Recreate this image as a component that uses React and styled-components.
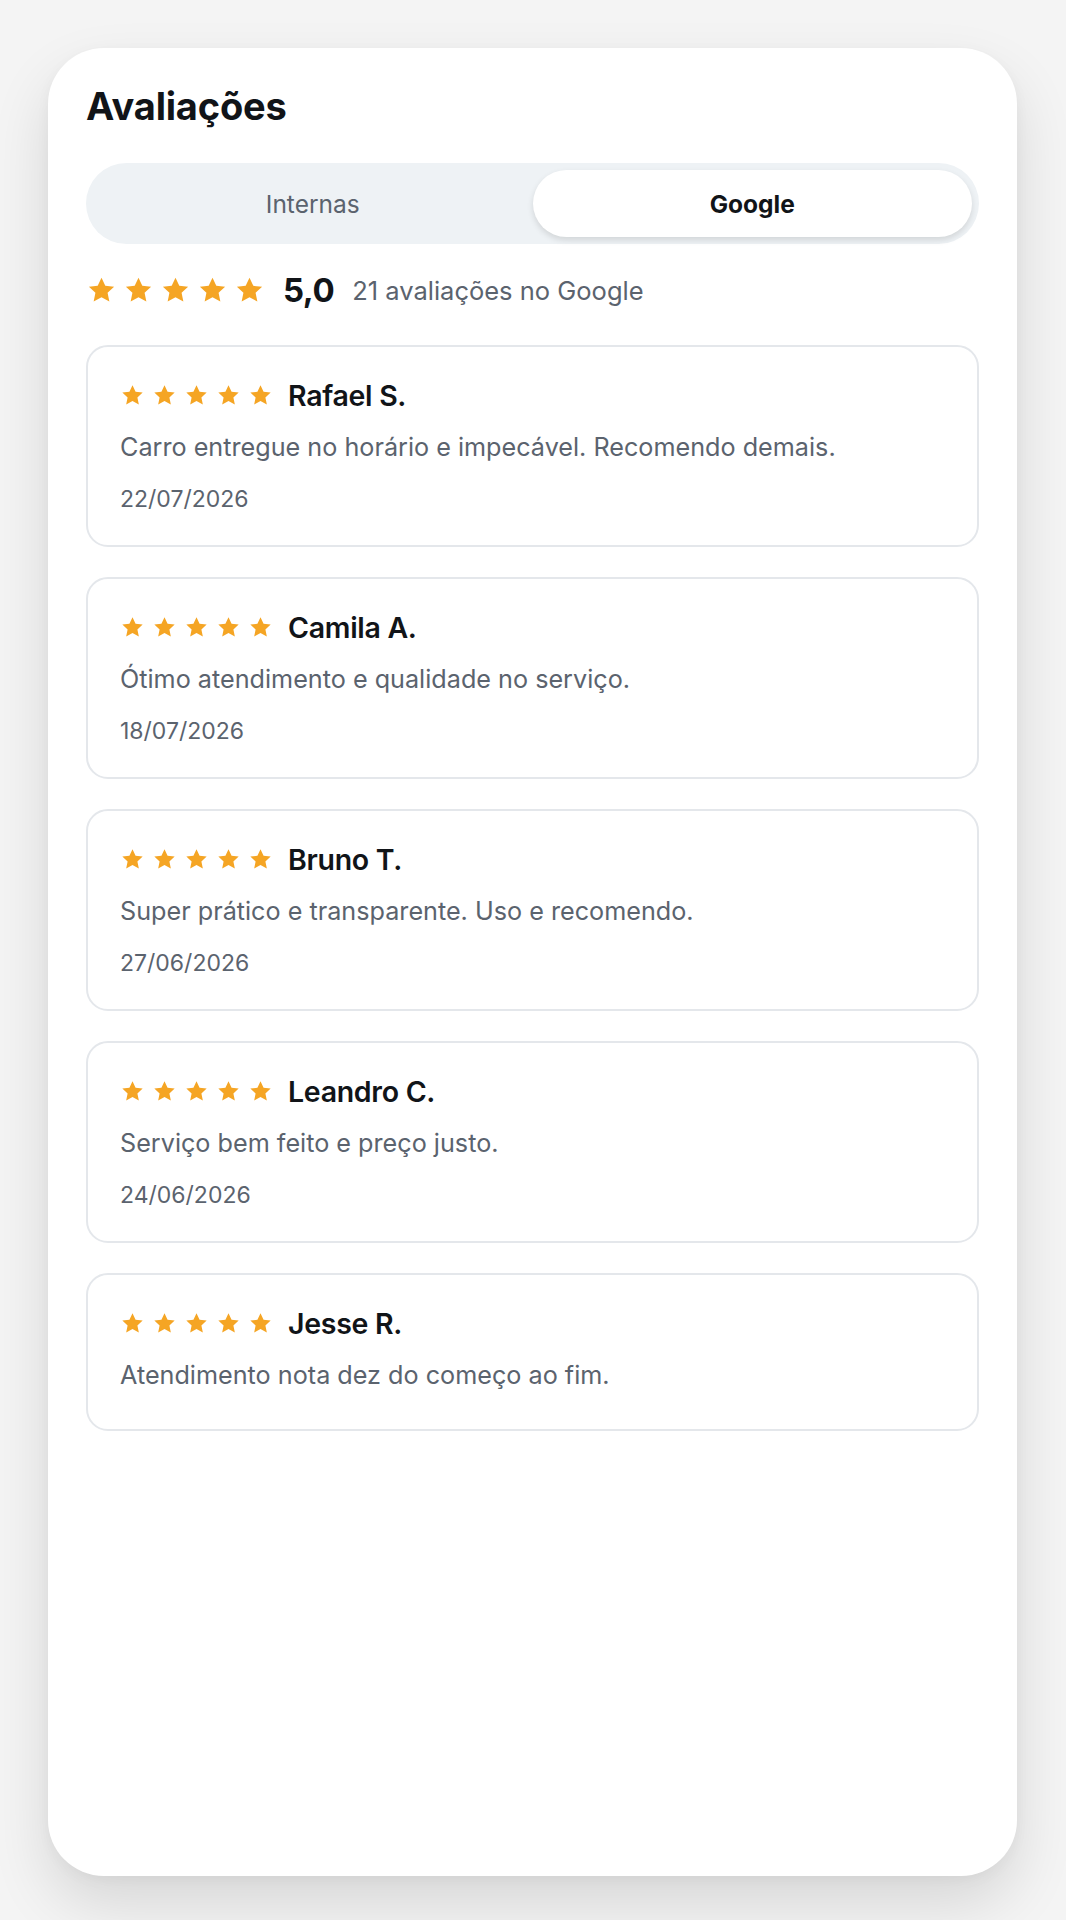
import React from 'react';
import styled, { createGlobalStyle } from 'styled-components';

const GlobalStyle = createGlobalStyle`
    * {
        box-sizing: border-box;
    }
    body {
        margin: 0;
        background-color: #f4f4f4;
        font-family: Inter, 'Noto Sans', sans-serif;
        color: #111418;
    }
`;

const Page = styled.div`
    min-height: 1920px;
    padding: 48px 49px 44px 48px;
`;
const Panel = styled.section`
    min-height: 1828px;
    background-color: #fff;
    border-radius: 56px;
    padding: 34px 38px;
    box-shadow: 0 28px 60px rgba(0, 0, 0, 0.12), 0 4px 14px rgba(0, 0, 0, 0.04);
`;
const Title = styled.h1`
    margin: 0;
    font-size: 38px;
    line-height: 48px;
    font-weight: 700;
    letter-spacing: -0.2px;
    color: #111418;
`;
const Tabs = styled.div`
    margin-top: 33px;
    height: 81px;
    padding: 7px;
    display: grid;
    grid-template-columns: 1fr 1fr;
    background-color: #eef2f5;
    border-radius: 999px;
`;
const Tab = styled.button`
    border: none;
    border-radius: 999px;
    font-family: inherit;
    font-size: 24.5px;
    font-weight: ${(props) => (props.$active ? 700 : 400)};
    color: ${(props) => (props.$active ? '#111418' : '#5b636e')};
    background-color: ${(props) => (props.$active ? '#fff' : 'transparent')};
    box-shadow: ${(props) => (props.$active ? '0 3px 6px rgba(0, 0, 0, 0.12)' : 'none')};
    cursor: pointer;
`;
const Summary = styled.div`
    margin-top: 29px;
    display: flex;
    align-items: center;
    height: 34px;
`;
const Stars = styled.div`
    display: flex;
    align-items: center;
    gap: ${(props) => props.$gap}px;
    svg {
        display: block;
        width: ${(props) => props.$size}px;
        height: ${(props) => props.$size}px;
    }
`;
const Score = styled.span`
    margin-left: 18px;
    font-size: 33px;
    font-weight: 700;
    letter-spacing: -0.5px;
    color: #111418;
`;
const Count = styled.span`
    margin-left: 18px;
    font-size: 25.5px;
    color: #5b636e;
`;
const List = styled.div`
    margin-top: 38px;
    display: flex;
    flex-direction: column;
    gap: 30px;
`;
const Review = styled.article`
    border: 2px solid #e4e7eb;
    border-radius: 22px;
    padding: 31px 32px ${(props) => (props.$date ? 30 : 36)}px;
`;
const ReviewHead = styled.div`
    display: flex;
    align-items: center;
    height: 34px;
`;
const Name = styled.span`
    margin-left: 15px;
    font-size: 28.5px;
    font-weight: 600;
    letter-spacing: -0.3px;
    color: #111418;
`;
const Text = styled.p`
    margin: 18px 0 0;
    font-size: 25.2px;
    line-height: 35px;
    color: #5b636e;
`;
const DateLine = styled.div`
    margin-top: 19px;
    font-size: 23px;
    line-height: 31px;
    color: #5b636e;
`;

const reviews = [
    { id: 1, name: 'Rafael S.', text: 'Carro entregue no horário e impecável. Recomendo demais.', date: '22/07/2026' },
    { id: 2, name: 'Camila A.', text: 'Ótimo atendimento e qualidade no serviço.', date: '18/07/2026' },
    { id: 3, name: 'Bruno T.', text: 'Super prático e transparente. Uso e recomendo.', date: '27/06/2026' },
    { id: 4, name: 'Leandro C.', text: 'Serviço bem feito e preço justo.', date: '24/06/2026' },
    { id: 5, name: 'Jesse R.', text: 'Atendimento nota dez do começo ao fim.' },
];

function Star() {
    return (
        <svg viewBox="0 0 24 24">
            <path
                fill="#f5a524"
                d="M12 2.2l2.95 6.2 6.8.78-5.05 4.65 1.38 6.72L12 17.18l-6.08 3.37 1.38-6.72L2.25 9.18l6.8-.78z"
            />
        </svg>
    );
}

function StarRow({ size, gap }) {
    return (
        <Stars $size={size} $gap={gap}>
            {[0, 1, 2, 3, 4].map((i) => (
                <Star key={i} />
            ))}
        </Stars>
    );
}

function App() {
    return (
        <Page>
            <GlobalStyle />
            <Panel>
                <Title>Avaliações</Title>
                <Tabs>
                    <Tab>Internas</Tab>
                    <Tab $active>Google</Tab>
                </Tabs>
                <Summary>
                    <StarRow size={31} gap={6} />
                    <Score>5,0</Score>
                    <Count>21 avaliações no Google</Count>
                </Summary>
                <List>
                    {reviews.map((review) => (
                        <Review key={review.id} $date={!!review.date}>
                            <ReviewHead>
                                <StarRow size={25} gap={7} />
                                <Name>{review.name}</Name>
                            </ReviewHead>
                            <Text>{review.text}</Text>
                            {review.date && <DateLine>{review.date}</DateLine>}
                        </Review>
                    ))}
                </List>
            </Panel>
        </Page>
    );
}

export default App;
